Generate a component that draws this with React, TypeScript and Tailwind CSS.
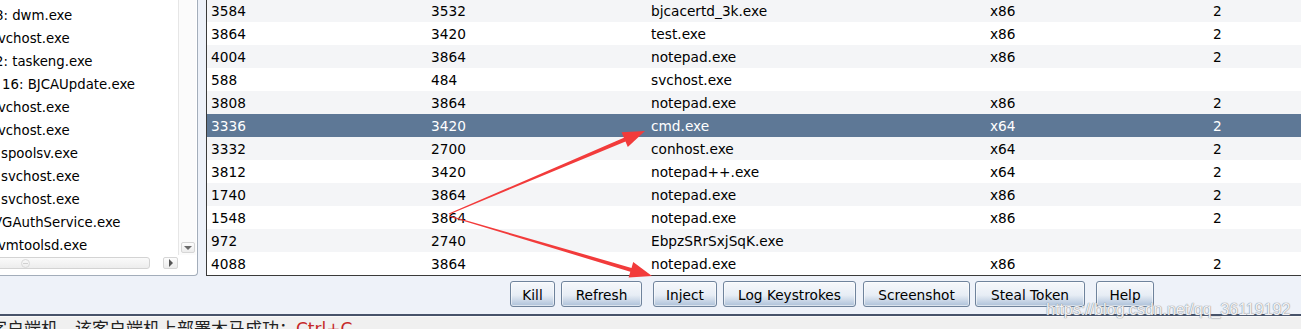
import React from "react";

type Proc = { pid: string; ppid: string; name: string; arch: string; session: string };

const procs: Proc[] = [
  { pid: "3584", ppid: "3532", name: "bjcacertd_3k.exe", arch: "x86", session: "2" },
  { pid: "3864", ppid: "3420", name: "test.exe", arch: "x86", session: "2" },
  { pid: "4004", ppid: "3864", name: "notepad.exe", arch: "x86", session: "2" },
  { pid: "588", ppid: "484", name: "svchost.exe", arch: "", session: "" },
  { pid: "3808", ppid: "3864", name: "notepad.exe", arch: "x86", session: "2" },
  { pid: "3336", ppid: "3420", name: "cmd.exe", arch: "x64", session: "2" },
  { pid: "3332", ppid: "2700", name: "conhost.exe", arch: "x64", session: "2" },
  { pid: "3812", ppid: "3420", name: "notepad++.exe", arch: "x64", session: "2" },
  { pid: "1740", ppid: "3864", name: "notepad.exe", arch: "x86", session: "2" },
  { pid: "1548", ppid: "3864", name: "notepad.exe", arch: "x86", session: "2" },
  { pid: "972", ppid: "2740", name: "EbpzSRrSxjSqK.exe", arch: "", session: "" },
  { pid: "4088", ppid: "3864", name: "notepad.exe", arch: "x86", session: "2" },
];

// tree is scrolled sideways, so every node gets its own offset
const tree = [
  { text: "8: dwm.exe", cls: "ml-[-5px]" },
  { text: "svchost.exe", cls: "ml-[-9px]" },
  { text: "2: taskeng.exe", cls: "ml-[-5px]" },
  { text: "16: BJCAUpdate.exe", cls: "ml-[2px]" },
  { text: "svchost.exe", cls: "ml-[-9px]" },
  { text: "svchost.exe", cls: "ml-[-9px]" },
  { text: "spoolsv.exe", cls: "ml-[1px]" },
  { text: "svchost.exe", cls: "ml-[1px]" },
  { text: "svchost.exe", cls: "ml-[1px]" },
  { text: "VGAuthService.exe", cls: "ml-[-7px]" },
  { text: "vmtoolsd.exe", cls: "ml-[-2px]" },
];

const buttons = [
  { label: "Kill", cls: "w-[45px]" },
  { label: "Refresh", cls: "w-[81px] ml-[6px]" },
  { label: "Inject", cls: "w-[64px] ml-[11px]" },
  { label: "Log Keystrokes", cls: "w-[133px] ml-[6px]" },
  { label: "Screenshot", cls: "w-[107px] ml-[7px]" },
  { label: "Steal Token", cls: "w-[110px] ml-[5px]" },
  { label: "Help", cls: "w-[58px] ml-[11px]" },
];

function ProcessTree() {
  return (
    <div className="w-[198px] h-[276px] shrink-0 bg-white border-r border-b border-[#a3adba] rounded-br-[4px] overflow-hidden flex flex-col">
      <div className="flex h-[255px]">
        <div className="w-[178px] overflow-hidden pt-[4px] text-[13.3px]">
          {tree.map((t, i) => (
            <div key={i} className={`h-[23px] leading-[23px] whitespace-nowrap text-black ${t.cls}`}>
              {t.text}
            </div>
          ))}
        </div>
        <div className="w-[18px] border-l border-[#e6e6e6] bg-[#fbfbfb] flex flex-col justify-end items-center pb-[2px]">
          <div className="w-[14px] h-[11px] border border-[#d6d6d6] rounded-[2px] bg-linear-to-b from-[#fdfdfd] to-[#ececec] flex items-center justify-center">
            <div className="w-0 h-0 border-x-[4px] border-x-transparent border-t-[4px] border-t-[#6b6b6b]" />
          </div>
        </div>
      </div>
      <div className="flex h-[16px] items-center">
        <div className="ml-[-4px] w-[154px] h-[12px] border border-[#d3d3d3] rounded-[3px] bg-linear-to-b from-[#fafafa] to-[#ededed] flex items-center">
          <div className="ml-[24px] w-[9px] h-[9px] rounded-full border border-[#d9d9d9] flex items-center justify-center">
            <div className="w-[5px] h-px bg-[#d0d0d0]" />
          </div>
        </div>
        <div className="ml-[13px] w-[15px] h-[12px] border border-[#d6d6d6] rounded-[2px] bg-linear-to-b from-[#fdfdfd] to-[#ececec] flex items-center justify-center">
          <div className="w-0 h-0 border-y-[4px] border-y-transparent border-l-[4px] border-l-[#555]" />
        </div>
      </div>
    </div>
  );
}

function ProcessTable() {
  return (
    <div className="ml-[8px] flex-1 h-[276px] bg-white border-l border-b border-[#3a3a3a] overflow-hidden">
      <div className="mt-[-1px]">
        {procs.map((p, i) => {
          const selected = p.pid === "3336";
          const bg = selected ? "bg-[#5e7896] text-white" : i % 2 === 0 ? "bg-[#f4f5f7] text-black" : "bg-white text-black";
          return (
            <div key={i} className={`grid grid-cols-[220px_220px_339px_223px_1fr] h-[23px] leading-[21px] pt-[2px] ${bg}`}>
              <div className="pl-[4px]">{p.pid}</div>
              <div className="pl-[4px]">{p.ppid}</div>
              <div className="pl-[4px]">{p.name}</div>
              <div className="pl-[4px]">{p.arch}</div>
              <div className="pl-[4px]">{p.session}</div>
            </div>
          );
        })}
      </div>
    </div>
  );
}

function Arrows() {
  return (
    <svg className="absolute left-0 top-0 pointer-events-none" width="1301" height="329" viewBox="0 0 1301 329">
      <polygon
        fill="#f23b3b"
        points="449.2,214.5 625.5,141.4 627.8,147.0 645,131 621.6,132.2 623.9,137.8 448.8,213.5"
      />
      <polygon
        fill="#f23b3b"
        points="448.9,216.5 630.3,271.7 628.6,277.5 652,276 633.2,262.1 631.5,267.9 449.1,215.5"
      />
    </svg>
  );
}

export default function App() {
  return (
    <div className="relative w-[1301px] h-[329px] overflow-hidden bg-[#eef2f9] text-[13.7px] font-['DejaVu_Sans','Noto_Sans_CJK_SC',sans-serif]">
      <div className="flex h-[276px]">
        <ProcessTree />
        <ProcessTable />
      </div>

      <div className="h-[40px] flex items-start pt-[5px] pl-[510px] border-b-2 border-[#47536a]">
        {buttons.map((b) => (
          <button
            key={b.label}
            className={`h-[26px] pt-[2px] rounded-[3px] border border-[#6f839c] bg-linear-to-b from-[#f6f8fb] via-[#e7edf5] via-55% to-[#adc1d9] shadow-[inset_0_0_0_1px_rgba(255,255,255,0.55)] text-black text-[13.7px] leading-[22px] text-center ${b.cls}`}
          >
            {b.label}
          </button>
        ))}
      </div>

      <div className="h-[13px] border-t border-[#fafafa] bg-[#f0f0f0] pt-[4px] whitespace-nowrap text-[17px] leading-[17px] text-[#222]">
        <span className="ml-[-10px]">客户端机，该客户端机上部署木马成功：</span>
        <span className="text-[#c62828]">Ctrl+C</span>
      </div>

      <Arrows />

      <div className="absolute left-[1046px] top-[300px] font-['Liberation_Sans',sans-serif] text-[16px] leading-[20px] text-white/90 [text-shadow:0_0_1px_#7d838e,0_0_1px_#7d838e] pointer-events-none">
        https://blog.csdn.net/qq_36119192
      </div>
    </div>
  );
}
